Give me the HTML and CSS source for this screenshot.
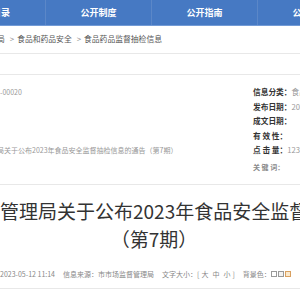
FILE: index.html
```html
<!DOCTYPE html>
<html lang="zh">
<head>
    <meta charset="UTF-8">
    <meta name="viewport" content="width=device-width, initial-scale=1.0">
    <title>食品药品监督抽检信息</title>
    <link rel="stylesheet" href="styles.css">
</head>
<body>
    <div class="nav">
        <a class="nav-item nav-first">公开目录</a>
        <a class="nav-item">公开制度</a>
        <a class="nav-item">公开指南</a>
        <a class="nav-item">公开年报</a>
    </div>
    <div class="crumbs">
        局<span class="sep">&gt;</span>食品和药品安全<span class="sep">&gt;</span>食品药品监督抽检信息
    </div>
    <div class="main">
        <div class="info">
            <div class="cell">-00020</div>
            <div class="cell side"><b>信息分类：</b>食品安全</div>
            <div class="cell"></div>
            <div class="cell side"><b>发布日期：</b>2023-05-12</div>
            <div class="cell"></div>
            <div class="cell side"><b>成文日期：</b></div>
            <div class="cell"></div>
            <div class="cell side"><b>有 效 性：</b></div>
            <div class="cell cut">局关于公布2023年食品安全监督抽检信息的通告（第7期）</div>
            <div class="cell side"><b>点 击 量：</b>1234</div>
            <div class="cell"></div>
            <div class="cell side keywords"><b>关 键 词：</b></div>
        </div>
        <h1 class="title">管理局关于公布2023年食品安全监督抽检信息的通告<br>（第7期）</h1>
        <div class="meta">
            <span>2023-05-12 11:14</span>
            <span>信息来源：市市场监督管理局</span>
            <span>文字大小：[<a class="size">大</a><a class="size">中</a><a class="size">小</a>]</span>
            <span class="bg">背景色：<i class="swatch"></i><i class="swatch swatch-gray"></i><i class="swatch swatch-warm"></i></span>
        </div>
    </div>
</body>
</html>
```

FILE: styles.css
```css
body {
    margin: 0;
    background: #fff;
    color: #333;
    font-family: "Noto Sans CJK SC", "Liberation Sans", sans-serif;
    overflow: hidden;
}
.nav {
    display: flex;
    height: 25px;
    background: #4679c3;
    border-bottom: 1px solid #739bd6;
    overflow: hidden;
}
.nav-item {
    flex: 0 0 106px;
    min-width: 0;
    box-sizing: border-box;
    display: flex;
    align-items: center;
    justify-content: center;
    border-left: 1px solid #5b87c8;
    color: #fff;
    font-size: 9px;
    font-weight: bold;
    white-space: nowrap;
    text-decoration: none;
}
.nav-first {
    flex-basis: 45px;
    justify-content: flex-end;
    padding-right: 35px;
    border-left: none;
}
.crumbs {
    height: 27px;
    line-height: 25px;
    font-size: 7.8px;
    color: #555;
    white-space: nowrap;
    text-indent: -3px;
    border-bottom: 1px solid #e8e8e8;
}
.sep {
    padding: 0 3px 0 5px;
    color: #888;
}
.main {
    width: 308px;
    margin-top: 20px;
    border-top: 1px solid #e8e8e8;
}
.info {
    display: grid;
    grid-template-columns: 253px 1fr;
    grid-template-rows: repeat(6, 14.5px);
    padding: 10px 0 12px;
    border-bottom: 1px solid #e8e8e8;
    font-size: 7px;
    line-height: 14.5px;
    color: #999;
    white-space: nowrap;
}
.side {
    font-size: 7.7px;
}
.cell b {
    color: #333;
}
.cut {
    text-indent: -3px;
}
.keywords {
    margin-top: 2.5px;
    font-size: 7px;
}
.keywords b {
    color: #888;
}
.title {
    margin: 0;
    padding-top: 12px;
    font-size: 19px;
    font-weight: normal;
    line-height: 28px;
    text-align: center;
    white-space: nowrap;
    color: #333;
}
.meta {
    display: flex;
    gap: 8px;
    margin-top: 13px;
    padding-bottom: 6px;
    border-bottom: 1px solid #e8e8e8;
    font-size: 7px;
    line-height: 16px;
    color: #888;
    white-space: nowrap;
}
.size {
    margin: 0 2px;
}
.bg {
    display: flex;
    align-items: center;
}
.swatch {
    width: 4px;
    height: 4px;
    margin-right: 1px;
    border: 1px solid #999;
    background: #fff;
}
.swatch-gray {
    background: #f2f2f2;
}
.swatch-warm {
    border-color: #d9a060;
    background: #fbe9cc;
}
```
